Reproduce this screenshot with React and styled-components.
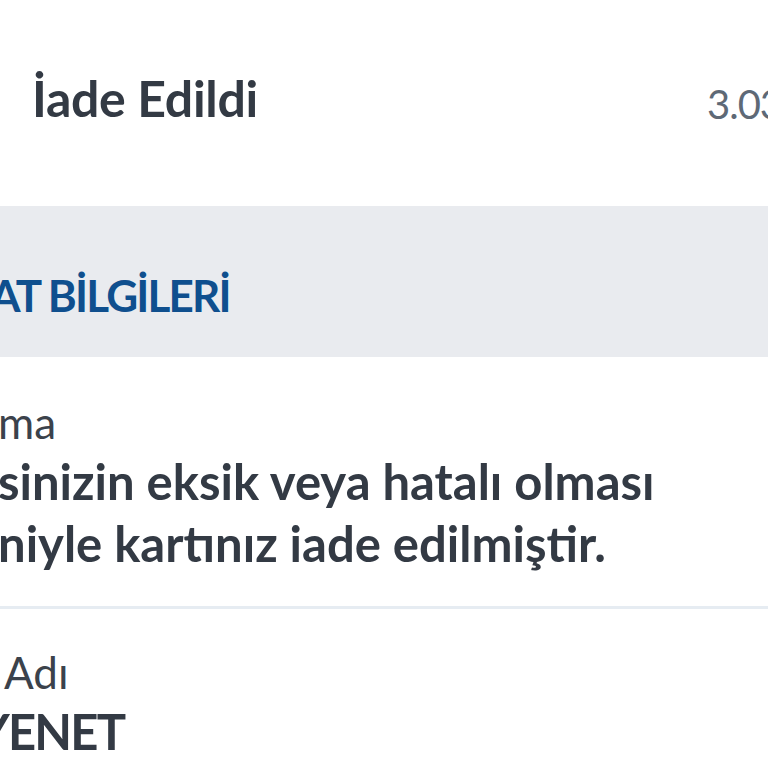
import React from 'react';
import styled, { createGlobalStyle } from 'styled-components';

const Global = createGlobalStyle`
    html, body {
        margin: 0;
        padding: 0;
        background: #ffffff;
    }
    body {
        width: 768px;
        height: 768px;
        overflow: hidden;
        font-family: "Lato", "Noto Sans", sans-serif;
        color: #333a44;
    }
`

const Page = styled.div`
    width: 768px;
    height: 768px;
    overflow: hidden;
    display: flex;
    flex-direction: column;
`

const StatusBar = styled.div`
    height: 206px;
    flex-shrink: 0;
    display: flex;
    justify-content: space-between;
    align-items: flex-start;
    padding: 69px 0 0 32px;
    box-sizing: border-box;
`

const StatusTitle = styled.h1`
    margin: 0;
    font-size: 50px;
    font-weight: 700;
    line-height: 58px;
    letter-spacing: -0.3px;
    color: #333a44;
`

const StatusDate = styled.span`
    margin-top: 10px;
    font-size: 40px;
    line-height: 50px;
    letter-spacing: -1px;
    color: #5e6976;
    white-space: nowrap;
    width: 61px;
    overflow: hidden;
`

const SectionHead = styled.div`
    height: 151px;
    flex-shrink: 0;
    background: #e9ebef;
    display: flex;
    align-items: center;
    padding-top: 26px;
    box-sizing: border-box;
    overflow: hidden;
`

const SectionTitle = styled.h2`
    margin: 0 0 0 ${p => p.shift || 0}px;
    font-size: 44px;
    font-weight: 700;
    line-height: 56px;
    letter-spacing: -1.8px;
    color: #0f4f8e;
    white-space: nowrap;
`

const Field = styled.div`
    flex-shrink: 0;
    padding: ${p => p.top}px 0 ${p => p.bottom}px;
    border-bottom: ${p => (p.divider ? '3px solid #e6ecf2' : 'none')};
    overflow: hidden;
`

const Label = styled.div`
    margin-left: ${p => p.shift || 0}px;
    font-size: 44px;
    line-height: 56px;
    color: #3b424b;
    white-space: nowrap;
`

const Value = styled.div`
    margin-left: ${p => p.shift || 0}px;
    font-size: 49px;
    line-height: 62px;
    font-weight: 700;
    letter-spacing: ${p => (p.caps ? '-1.8px' : '0')};
    color: #333a44;
    white-space: nowrap;
`

const App = () => {
    return (
        <>
            <Global />
            <Page>
                <StatusBar>
                    <StatusTitle>İade Edildi</StatusTitle>
                    <StatusDate>3.03.2023</StatusDate>
                </StatusBar>
                <SectionHead>
                    <SectionTitle shift={-10}>AT BİLGİLERİ</SectionTitle>
                </SectionHead>
                <Field top={37} bottom={32} divider>
                    <Label shift={-2}>ma</Label>
                    <Value shift={-2}>sinizin eksik veya hatalı olması</Value>
                    <Value shift={-2}>niyle kartınız iade edilmiştir.</Value>
                </Field>
                <Field top={35} bottom={0}>
                    <Label shift={4}>Adı</Label>
                    <Value shift={-22} caps>YENET</Value>
                </Field>
            </Page>
        </>
    );
};

export default App;
